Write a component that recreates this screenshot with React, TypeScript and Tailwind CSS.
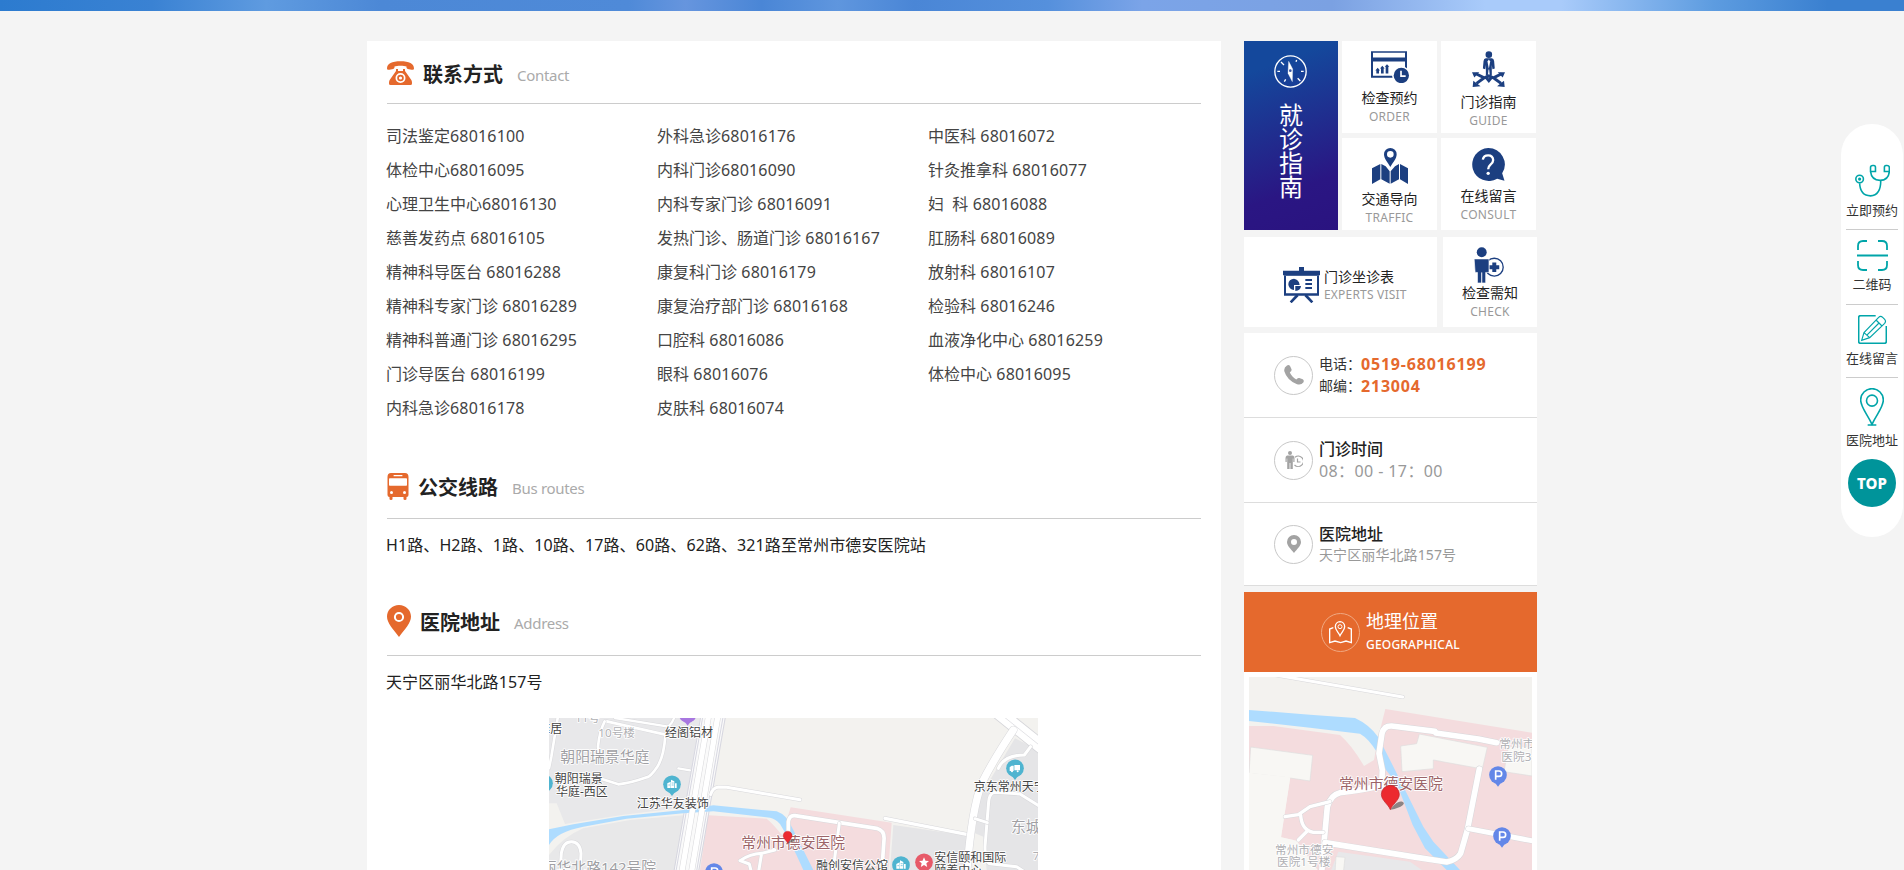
import React from "react";

const CONTACTS: string[][] = [
  ["司法鉴定", "68016100"], ["外科急诊", "68016176"], ["中医科", " 68016072"],
  ["体检中心", "68016095"], ["内科门诊", "68016090"], ["针灸推拿科", " 68016077"],
  ["心理卫生中心", "68016130"], ["内科专家门诊", " 68016091"], ["妇\u00a0 科", " 68016088"],
  ["慈善发药点", " 68016105"], ["发热门诊、肠道门诊", " 68016167"], ["肛肠科", " 68016089"],
  ["精神科导医台", " 68016288"], ["康复科门诊", " 68016179"], ["放射科", " 68016107"],
  ["精神科专家门诊", " 68016289"], ["康复治疗部门诊", " 68016168"], ["检验科", " 68016246"],
  ["精神科普通门诊", " 68016295"], ["口腔科", " 68016086"], ["血液净化中心", " 68016259"],
  ["门诊导医台", " 68016199"], ["眼科", " 68016076"], ["体检中心", " 68016095"],
  ["内科急诊", "68016178"], ["皮肤科", " 68016074"],
];

const PhoneIcon = () => (
  <svg width="27" height="24" viewBox="0 0 27 24" fill="#e5692d">
    <path d="M0 7.5C0 2.5 5 .3 13.5 .3S27 2.5 27 7.500C27 8.700 26 9 24.500 8.700L20.800 8C19.500 7.700 19.500 7 19.500 5.600C17 4.500 10 4.500 7.500 5.600C7.500 7 7.500 7.700 6.200 8L2.500 8.700C1 9 0 8.700 0 7.500Z" />
    <path fillRule="evenodd" d="M9 8H11V10H16V8H18V10L24 18.500C25 20 25 21 25 22.500Q25 24 23.500 24H3.500Q2 24 2 22.500C2 21 2 20 3 18.500L9 10ZM13.500 12A5 5 0 1 0 13.500 22A5 5 0 1 0 13.500 12ZM13.500 13.700A3.300 3.300 0 1 1 13.500 20.300A3.300 3.300 0 1 1 13.500 13.700ZM13.500 15.400A1.600 1.600 0 1 0 13.500 18.600A1.600 1.600 0 1 0 13.500 15.400Z" />
  </svg>
);

const BusIcon = () => (
  <svg width="22" height="27" viewBox="0 0 22 27">
    <path fill="#e5692d" d="M4 0H18Q21.500 0 21.500 4V22Q21.500 24 19.500 24V26Q19.500 27 18 27T16.500 26V24H5.500V26Q5.500 27 4 27T2.500 26V24Q.5 24 .5 22V4Q.5 0 4 0Z" />
    <rect x="2" y="5.300" width="18" height="7.500" rx=".8" fill="#fff" />
    <rect x="6.500" y="2" width="9" height="1.300" rx=".6" fill="#fff" />
    <circle cx="4.500" cy="19.500" r="1.500" fill="#fff" />
    <circle cx="17.500" cy="19.500" r="1.500" fill="#fff" />
  </svg>
);

const PinIcon = () => (
  <svg width="24" height="32" viewBox="0 0 24 32">
    <path fill="#e5692d" d="M12 0C5.200 0 0 5.200 0 11.500C0 18 6 24 12 32C18 24 24 18 24 11.500C24 5.200 18.800 0 12 0Z" />
    <circle cx="12" cy="12" r="4.100" fill="none" stroke="#fff" strokeWidth="2" />
  </svg>
);

function Heading({ icon, title, en }: { icon: React.ReactNode; title: string; en: string }) {
  return (
    <>
      {icon}
      <h2 className="ml-[9px] pt-[3px] text-[20px] leading-[26px] font-bold text-[#222]">{title}</h2>
      <span className="ml-[14px] pt-[4px] text-[15px] leading-[24px] tracking-[-0.3px] text-[#aaa]">{en}</span>
    </>
  );
}

type PoiProps = { x: number; y: number; color: string; children?: React.ReactNode };
function Poi({ x, y, color, children }: PoiProps) {
  return (
    <g transform={`translate(${x} ${y})`}>
      <path d="M-10 22L0 35L10 22Z" fill={color} />
      <circle r="26.500" fill={color} />
      {children}
    </g>
  );
}

const Building = () => (
  <g fill="#fff">
    <path d="M-14 -3L-4 -8V11H-14Z" />
    <path d="M-3 -14L7 -9V11H-3Z" />
    <path d="M9 -3H14V11H9Z" />
    <path stroke="#4fb4d0" strokeWidth="2" d="M-1 -4H5M-1 2H5M-11 2H-6" />
  </g>
);
const Parking = () => <path d="M-7 14V-12H3Q11 -12 11 -4T3 4H-6" fill="none" stroke="#fff" strokeWidth="5" />;

function Road({ d, w = 9 }: { d: string; w?: number }) {
  return (
    <g fill="none" strokeLinecap="round" strokeLinejoin="round">
      <path d={d} stroke="#d8d8db" strokeWidth={w + 3} />
      <path d={d} stroke="#fff" strokeWidth={w} />
    </g>
  );
}

const Marker = () => (
  <>
    <path d="M0 0C10 -14 24 -28 36 -24S36 -6 0 0Z" fill="#555" opacity=".65" />
    <path d="M0 0C-6 -16 -27 -28 -27 -46A27 27 0 0 1 27 -46C27 -28 6 -16 0 0Z" fill="#ec2a2f" stroke="#b9242b" strokeWidth="2" />
  </>
);

const MAP_TEXT = "font-['Noto_Sans','Noto_Sans_CJK_SC',sans-serif] [paint-order:stroke] stroke-white [stroke-width:5px] [stroke-linejoin:round]";

function CityMap() {
  return (
    <svg width="489" height="152" viewBox="27 54 1467 456" className="block">
      <rect x="27" y="54" width="1467" height="456" fill="#f3f2ef" />
      <path d="M27 54H490L440 322L250 344L75 372L50 310H27Z" fill="#e8e8ea" />
      <path d="M130 385L270 360L430 346L405 510H27V465Q70 410 130 385Z" fill="#e8e8e9" />
      <path d="M505 346L680 356Q700 372 728 408L745 345L752 322L1055 368L1045 510H480Z" fill="#f4dcde" />
      <path d="M1060 375L1290 408L1280 510H1050Z" fill="#e5e5e7" />
      <path d="M1425 115L1494 150V510H1340L1330 410L1305 400L1320 290Z" fill="#e5e5e7" />
      <g fill="none">
        <Road d="M225 54L385 80Q400 66 404 48" w={7} />
        <Road d="M200 64L376 104Q372 170 352 200T320 232Q270 250 235 253L188 238" w={8} />
        <Road d="M194 64Q178 95 174 140L176 152" w={8} />
        <Road d="M54 48L34 170L27 205" w={8} />
        <Road d="M415 205L450 211" w={7} />
        <Road d="M60 520L64 460Q70 424 95 425T123 460L120 520" w={9} />
        <path d="M520 40L437 525" stroke="#fafafa" strokeWidth="72" />
        <path d="M484 40L400 525M558 40L474 525M490 40L406 525M551 40L468 525" stroke="#d0d0dc" strokeWidth="2.500" />
      </g>
      <path d="M27 388L100 373L250 348L430 330L520 316L710 334Q740 345 755 380L820 510H790Q750 420 720 372Q705 355 690 353L520 334L430 340L260 356L130 380Q50 395 27 435Z" fill="#aedcff" />
      <Road d="M507 40L424 525" w={16} />
      <Road d="M535 40L453 525" w={16} />
      <Road d="M512 284Q517 264 535 261L560 262L780 299" w={9} />
      <Road d="M745 410V365Q748 345 765 347L1010 385Q1035 392 1032 420L1025 520" w={11} />
      <Road d="M898 370L878 520" w={9} />
      <Road d="M705 450L665 460L655 520M665 460Q630 462 600 482L628 492L635 520" w={9} />
      <Road d="M1035 355L1280 403" w={10} />
      <path d="M1360 25L1510 145" stroke="#d5d5d9" strokeWidth="44" />
      <path d="M1360 25L1510 145" stroke="#fff" strokeWidth="39" />
      <path d="M1360 25L1510 145" stroke="#d5d5d9" strokeWidth="2" />
      <Road d="M1420 90Q1360 180 1325 250Q1295 330 1280 520" w={22} />
      <Road d="M1472 140L1453 165Q1392 165 1375 205" w={9} />
      <Road d="M1510 326L1440 282L1362 277Q1348 282 1346 305L1335 440Q1335 488 1350 491L1430 500L1475 530" w={9} />
      <Road d="M1305 356L1342 368" w={9} />
      <Poi x={443} y={42} color="#a877e0" />
      <Poi x={396} y={253} color="#4fb4d0"><Building /></Poi>
      <Poi x={12} y={250} color="#4fb4d0" />
      <Poi x={1425} y={205} color="#4fb4d0">
        <path d="M-16 -3L-10 -8H-4V8H-16ZM-2 -10H15V6H-2Z" fill="#fff" />
        <circle cx="-9" cy="9" r="3" fill="#fff" /><circle cx="8" cy="9" r="3" fill="#fff" />
      </Poi>
      <Poi x={522} y={516} color="#6387e8"><Parking /></Poi>
      <Poi x={1083} y={495} color="#4fb4d0"><Building /></Poi>
      <Poi x={1152} y={487} color="#e75a69">
        <path fill="#fff" d="M0 -15L4.500 -5L15 -4L7 3L9.500 14L0 8L-9.500 14L-7 3L-15 -4L-4.500 -5Z" />
      </Poi>
      <g className={MAP_TEXT} fontSize="36" fill="#444">
        <text x="-5" y="98">雅居</text>
        <text x="375" y="110">经阁铝材</text>
        <text x="44" y="248">朝阳瑞景</text>
        <text x="48" y="287">华庭-西区</text>
        <text x="290" y="323">江苏华友装饰</text>
        <text x="1301" y="274">京东常州天宁</text>
        <text x="1183" y="485">安信颐和国际</text>
        <text x="1183" y="524">颐养中心</text>
        <text x="828" y="510">融创安信公馆</text>
      </g>
      <g className={MAP_TEXT} fontSize="35" fill="#b0b0b4">
        <text x="105" y="65">11号</text>
        <text x="175" y="112">10号楼</text>
        <text x="1478" y="480">7</text>
      </g>
      <g className={MAP_TEXT} fontSize="44.500" fill="#a0a0a4">
        <text x="61" y="186">朝阳瑞景华庭</text>
        <text x="5" y="519">丽华北路142号院</text>
        <text x="1413" y="397">东城</text>
      </g>
      <text className={MAP_TEXT} fontSize="44.500" fill="#9c6468" x="604" y="445">常州市德安医院</text>
      <g transform="translate(743 430) scale(.5)"><Marker /></g>
    </svg>
  );
}

function SiteMap() {
  return (
    <svg width="283" height="193" viewBox="57 51 849 579" className="block">
      <rect x="57" y="51" width="849" height="579" fill="#f3f2ef" />
      <path d="M57 198L130 198L330 225Q365 255 402 318L432 300L445 230L466 147L906 218V640H270L190 540L153 532L180 355L57 340Z" fill="#f4dcde" />
      <path d="M62 261L248 286L240 363L180 354L57 340Z" fill="#f8f7f4" stroke="#dedede" strokeWidth="2" />
      <path d="M57 338L181 352L153 532L200 542L270 640H57Z" fill="#f8f7f4" />
      <path d="M57 150L240 164L375 174Q420 195 445 232L480 300L530 400L580 500L610 545L690 630H650L585 565L548 495L500 370L468 330L440 275Q415 235 390 221L240 203L57 183Z" fill="#aedcff" />
      <path d="M512 258L560 251L568 222L772 262L757 327L610 300V326L516 335Z" fill="#f8f7f4" stroke="#dedede" strokeWidth="2" />
      <path d="M835 260H906V348L822 335Z" fill="#f8f7f4" stroke="#dedede" strokeWidth="2" />
      <path d="M325 575L540 605L590 640H300Z" fill="#e8e8ea" />
      <Road d="M130 44L518 111" w={9} />
      <Road d="M455 380L457 330L447 280L456 220Q462 197 485 198L615 214L617 219L745 237L800 248" w={17} />
      <Road d="M455 375Q430 385 330 398Q302 405 292 440L282 550L275 640" w={17} />
      <Road d="M165 470L205 464L240 440L300 425M212 466Q215 510 250 517H280M232 513L205 540" w={10} />
      <Road d="M285 548L560 592L650 606Q680 600 692 580L712 510L748 327" w={17} />
      <Road d="M715 506L910 543" w={15} />
      <path d="M318 590L345 592L340 640H315Z" fill="#f8f7f4" stroke="#dedede" strokeWidth="2" />
      <Poi x={804} y={345} color="#6387e8"><Parking /></Poi>
      <Poi x={816} y={528} color="#6387e8"><Parking /></Poi>
      <g className={MAP_TEXT} fontSize="35" fill="#b0b0b4">
        <text x="808" y="264">常州市德安</text>
        <text x="814" y="303">医院3号楼</text>
        <text x="135" y="581">常州市德安</text>
        <text x="141" y="619">医院1号楼</text>
      </g>
      <text className={MAP_TEXT} fontSize="44.500" fill="#9c6468" x="327" y="386">常州市德安医院</text>
      <g transform="translate(481 449)"><Marker /></g>
    </svg>
  );
}

const NAVY = "#1c3f80";

const OrderIcon = () => (
  <svg width="38" height="32" viewBox="420 63 114 95" fill={NAVY}>
    <path fillRule="evenodd" d="M420 63H528V143H420ZM426 68V82H522V68ZM426 94V137H522V94Z" />
    <path d="M436 130V121H433L440 113L447 121H444V130ZM450 130V115H447L454 107L461 115H458V130ZM464 130V110H461L468 102L475 110H472V130Z" />
    <circle cx="511" cy="136" r="28" fill="#fff" />
    <circle cx="511" cy="136" r="23" />
    <path d="M510 122V138H524" fill="none" stroke="#fff" strokeWidth="5" />
  </svg>
);
const GuideIcon = () => (
  <svg width="33" height="36" viewBox="726 62 100 109" fill={NAVY}>
    <circle cx="777" cy="73" r="10" />
    <path d="M768 84H786Q792 84 793 92L795 115L788 117L786 104V136H780L778 118H776L774 136H768V104L766 117L759 115L761 92Q762 84 768 84Z" />
    <path d="M777 88L781 94L777 116L773 94Z" fill="#fff" />
    <path d="M738 131L763 143L777 137L791 143L816 131M763 143L740 160M791 143L814 160M768 141L777 152L786 141" fill="none" stroke={NAVY} strokeWidth="9" />
    <path d="M726 126H748L733 142ZM826 126H804L819 142ZM728 171L730 152L752 169ZM825 171L823 152L802 169Z" />
  </svg>
);
const TrafficIcon = () => (
  <svg width="36" height="36" viewBox="423 354 108 108" fill={NAVY}>
    <path fillRule="evenodd" d="M478 354A19 19 0 0 1 497 373C497 386 486 397 478 411C470 397 459 386 459 373A19 19 0 0 1 478 354ZM478 363A10 10 0 1 0 478 383A10 10 0 1 0 478 363Z" />
    <path d="M423 415L448 402V448L423 462ZM451 402L464 409L476 424V461L451 448ZM479 424L492 409L504 402V448L479 461ZM507 402L531 415V462L507 448Z" />
  </svg>
);
const ConsultIcon = () => (
  <svg width="34" height="33" viewBox="725 354 101 99" className="-ml-[2px]">
    <path fill={NAVY} d="M776 354A49.500 49.500 0 0 1 818 430L825 452L803 446A49.500 49.500 0 1 1 776 354Z" />
    <path d="M760 389Q762 376 776 376T791 390Q791 398 783 404Q776 410 776 418" fill="none" stroke="#fff" strokeWidth="7" />
    <circle cx="776" cy="430" r="5" fill="#fff" />
  </svg>
);
const ExpertsIcon = () => (
  <svg width="37" height="36" viewBox="159 126 111 108" fill={NAVY}>
    <path d="M207 126H222V137H270V151H159V137H207Z" />
    <path fillRule="evenodd" d="M162 151H267V212H162ZM168 153V205H261V153Z" />
    <path d="M203 210L182 232M226 210L247 232" stroke={NAVY} strokeWidth="8" />
    <path d="M192 161A17 17 0 1 0 192 195V180H209Q207 163 192 161Z" />
    <path d="M196 183H213Q212 196 196 198Z" />
    <path d="M226 165H246M226 177H246M226 189H246" stroke={NAVY} strokeWidth="6" />
  </svg>
);
const CheckIcon = () => (
  <svg width="30" height="36" viewBox="735 65 90 109" fill={NAVY} className="-ml-[2px]">
    <circle cx="796" cy="126" r="27" fill="none" stroke={NAVY} strokeWidth="4" />
    <path d="M790 112H802V120H811V132H802V141H790V132H781V120H790Z" />
    <path d="M735 101H780V142H770V174H745V142H738Z" stroke="#fff" strokeWidth="2" />
    <path d="M758 142V174" stroke="#fff" strokeWidth="3" />
    <circle cx="758" cy="81" r="15" />
  </svg>
);

function Tile({ icon, zh, en, tight }: { icon: React.ReactNode; zh: string; en: string; tight?: boolean }) {
  return (
    <div className="flex flex-col items-center bg-white pt-[10px]">
      {icon}
      <div className={`text-[14px] leading-[20px] text-[#222] ${tight ? "mt-0" : "mt-[5px]"}`}>{zh}</div>
      <div className="text-[12px] leading-[17px] tracking-[0.3px] text-[#999]">{en}</div>
    </div>
  );
}

function Info({ icon, children }: { icon: React.ReactNode; children: React.ReactNode }) {
  return (
    <div className="flex items-center gap-[6px] border-b border-[#ddd] pl-[30px]">
      <div className="flex h-[39px] w-[39px] items-center justify-center rounded-full border border-[#c8c8c8]">{icon}</div>
      <div>{children}</div>
    </div>
  );
}

function SideLink({ icon, label, className }: { icon: React.ReactNode; label: string; className: string }) {
  return (
    <div className={`flex w-[52px] flex-col items-center justify-between ${className}`}>
      {icon}
      <span className="text-[13px] leading-[18px] whitespace-nowrap text-[#333]">{label}</span>
    </div>
  );
}

const TEAL = "#00a5a9";

export default function App() {
  return (
    <div className="relative h-[870px] w-full overflow-hidden bg-[#f4f4f4] font-['Noto_Sans','Noto_Sans_CJK_SC',sans-serif]">
      <div className="h-[11px] bg-[linear-gradient(90deg,#2c7bcf_0%,#3a82d3_8%,#5f9be0_14%,#4c88d6_20%,#4f8ad8_33%,#6695de_36%,#4a86d6_40%,#5f96de_44%,#4a86d6_48%,#5590dc_55%,#7ba4e8_60%,#7ba1e2_70%,#a9cbfa_78%,#a9cbfa_82%,#5d9ce0_90%,#3a80d0_96%,#3a80d0_100%)]" />
      <div className="mt-[30px] ml-[367px] flex w-[1170px] justify-between">
        <main className="h-[829px] w-[854px] overflow-hidden bg-white px-[20px]">
          <div className="flex h-[63px] items-center border-b border-[#ccc] pt-[2px]">
            <Heading icon={<PhoneIcon />} title="联系方式" en="Contact" />
          </div>
          <ul className="mt-[15px] -mr-px -ml-px grid grid-cols-[271px_271px_271px] text-[16px] leading-[34px] text-[#444]">
            {CONTACTS.map(([name, tel], i) => (
              <li key={i} className="h-[34px] whitespace-pre">
                {name}
                <span className="tracking-[0.18px]">{tel}</span>
              </li>
            ))}
          </ul>
          <div className="mt-[30px] flex h-[64px] items-center border-b border-[#ccc] pb-[1px]">
            <Heading icon={<BusIcon />} title="公交线路" en="Bus routes" />
          </div>
          <p className="mt-[10px] -ml-px text-[16px] leading-[32px] tracking-[0.1px] text-[#222]">H1路、H2路、1路、10路、17路、60路、62路、321路至常州市德安医院站</p>
          <div className="mt-[27px] flex h-[68px] items-center border-b border-[#ccc] pb-[1px]">
            <Heading icon={<PinIcon />} title="医院地址" en="Address" />
          </div>
          <p className="mt-[10px] -ml-px text-[16px] leading-[32px] tracking-[0.1px] text-[#222]">天宁区丽华北路157号</p>
          <div className="mt-[20px] ml-[162px]"><CityMap /></div>
        </main>

        <aside className="w-[293px]">
          <div className="flex h-[189px] gap-[4px]">
            <div className="flex w-[94px] flex-col items-center bg-[linear-gradient(160deg,#14489c_0%,#14489c_15%,#2a1683_75%,#2a1380_100%)] pt-[14px]">
              <svg width="33" height="33" viewBox="132 75 99 99" fill="none" stroke="#fff" strokeWidth="4" className="-ml-[2px]">
                <circle cx="181.500" cy="124.500" r="47" />
                <path d="M153 96L162 105M200 90L198 95M142 124H150M213 124H221M163 155L167 148M211 153L203 145" />
                <path d="M176 94L188 117L187 155L174 130Z" fill="#fff" strokeWidth="1" />
                <circle cx="181" cy="122" r="4" fill="#3a56a6" stroke="none" />
              </svg>
              <div className="mt-[15px] w-[24px] text-[24px] leading-[24px] text-white">就诊指南</div>
            </div>
            <div className="grid w-[194px] grid-cols-2 grid-rows-[92px_92px] gap-x-[4px] gap-y-[5px]">
              <Tile icon={<OrderIcon />} zh="检查预约" en="ORDER" />
              <Tile icon={<GuideIcon />} zh="门诊指南" en="GUIDE" />
              <Tile icon={<TrafficIcon />} zh="交通导向" en="TRAFFIC" />
              <Tile icon={<ConsultIcon />} zh="在线留言" en="CONSULT" />
            </div>
          </div>
          <div className="mt-[7px] grid h-[90px] grid-cols-[193px_94px] gap-[6px]">
            <div className="flex items-center gap-[4px] bg-white pt-[6px] pl-[39px]">
              <ExpertsIcon />
              <div>
                <div className="text-[14px] leading-[19px] text-[#222]">门诊坐诊表</div>
                <div className="text-[12px] leading-[18px] tracking-[0.2px] text-[#999]">EXPERTS VISIT</div>
              </div>
            </div>
            <Tile icon={<CheckIcon />} zh="检查需知" en="CHECK" tight />
          </div>
          <div className="mt-[6px] grid grid-rows-[85px_85px_83px] bg-white">
            <Info icon={
              <svg width="20" height="20" viewBox="0 0 20 20" fill="#a3a3a3">
                <path d="M3 .5Q5 -.8 6.300 1.500L7.500 4.300Q8 6 5.800 7.200Q7.500 11.800 12.300 14.500Q13.500 12.500 15.300 13L18.700 14.200Q20.500 15.300 19.300 17.500Q17 20.500 12.500 19Q3 15 .4 6.500Q-.5 2.500 3 .5Z" />
              </svg>
            }>
              <div className="flex text-[14px] leading-[22px] text-[#333]">电话：<b className="text-[16px] font-bold tracking-[0.8px] text-[#e5692d]">0519-68016199</b></div>
              <div className="flex text-[14px] leading-[22px] text-[#333]">邮编：<b className="text-[16px] font-bold tracking-[0.8px] text-[#e5692d]">213004</b></div>
            </Info>
            <Info icon={
              <svg width="18" height="18" viewBox="0 0 18 18" fill="#a3a3a3">
                <circle cx="5" cy="2" r="2" />
                <path d="M2 4.500H8Q9.500 5 9.500 7V11H8.300V7.500H7.800V18H5.400V12H4.600V18H2.200V7.500H1.700V11H.5V7Q.5 5 2 4.500Z" />
                <path d="M10 6.200A5.200 5.200 0 1 1 9.500 14M12.500 7.500V11H15.500" fill="none" stroke="#a3a3a3" strokeWidth="1.200" />
              </svg>
            }>
              <div className="text-[16px] leading-[22px] font-medium text-[#222]">门诊时间</div>
              <div className="text-[16px] leading-[22px] tracking-[0.4px] text-[#999]">08：00 - 17：00</div>
            </Info>
            <Info icon={
              <svg width="14" height="18" viewBox="0 0 14 18" fill="#a3a3a3">
                <path fillRule="evenodd" d="M7 0A7 7 0 0 1 14 7C14 11 10 14 7 18C4 14 0 11 0 7A7 7 0 0 1 7 0ZM7 4A3 3 0 1 0 7 10A3 3 0 1 0 7 4Z" />
              </svg>
            }>
              <div className="text-[16px] leading-[22px] font-medium text-[#222]">医院地址</div>
              <div className="-mt-px pb-px text-[14px] leading-[21px] tracking-[0.1px] text-[#999]">天宁区丽华北路157号</div>
            </Info>
          </div>
          <div className="mt-[6px] flex h-[80px] items-center gap-[6px] bg-[#e5692d] pl-[77px]">
            <div className="flex h-[39px] w-[39px] items-center justify-center rounded-full border border-[#f0a882]">
              <svg width="23" height="23" viewBox="300 630 69 69" fill="none" stroke="#fff" strokeWidth="4">
                <path d="M313 650L302 654V695L318 690L335 695L351 690L367 695V654L356 650" />
                <path d="M333 632A15 15 0 0 1 347 647C347 657 338 664 333 674C328 664 319 657 319 647A15 15 0 0 1 333 632Z" />
                <circle cx="333" cy="647" r="6" strokeWidth="3" />
              </svg>
            </div>
            <div className="text-white">
              <div className="text-[18px] leading-[24px]">地理位置</div>
              <div className="pt-px text-[12px] leading-[21px] font-medium tracking-[0.2px]">GEOGRAPHICAL</div>
            </div>
          </div>
          <div className="bg-white p-[5px]"><SiteMap /></div>
        </aside>
      </div>

      <nav className="absolute top-[124px] right-px flex h-[413px] w-[62px] flex-col items-center rounded-[31px] bg-white pt-[40px]">
        <SideLink className="h-[55px]" label="立即预约" icon={
          <svg width="35" height="33" viewBox="92 160 106 99" fill="none" stroke={TEAL} strokeWidth="4.800">
            <circle cx="106" cy="205" r="11.500" /><circle cx="106" cy="205" r="2.500" />
            <path d="M106 218Q108 256 139 256Q170 254 170 210" />
            <path d="M154 182H139V170Q139 164 146 164H149Q154 164 154 170ZM181 182H196V170Q196 164 189 164H186Q181 164 181 170ZM139 182Q142 209 168 209T196 182" />
          </svg>
        } />
        <div className="mt-[10px] mb-[10px] h-px w-[52px] bg-[#ccc]" />
        <SideLink className="h-[53px]" label="二维码" icon={
          <svg width="31" height="31" viewBox="0 0 31 31" fill="none" stroke={TEAL} strokeWidth="1.800">
            <path d="M1 10V6Q1 1 6 1H10M21 1H25Q30 1 30 6V10M1 21V25Q1 30 6 30H10M21 30H25Q30 30 30 25V21M0 15.500H31" />
          </svg>
        } />
        <div className="mt-[11px] mb-[10px] h-px w-[52px] bg-[#ccc]" />
        <SideLink className="h-[52px]" label="在线留言" icon={
          <svg width="29" height="29" viewBox="102 615 87 87" fill="none" stroke={TEAL} strokeWidth="4.800">
            <path d="M155 617H110Q104 617 104 623V694Q104 700 110 700H181Q187 700 187 694V648" />
            <path d="M113 691L120 668L164 622Q170 616 176 622L182 628Q187 634 182 640L137 683ZM156 630L174 648M120 668L137 683M128 676L165 639" strokeWidth="3.500" />
          </svg>
        } />
        <div className="mt-[10px] mb-[10px] h-px w-[52px] bg-[#ccc]" />
        <SideLink className="h-[61px]" label="医院地址" icon={
          <svg width="24" height="38" viewBox="108 834 72 114" fill="none" stroke={TEAL} strokeWidth="4.800">
            <path d="M144 836A34 34 0 0 1 178 870C178 892 158 912 144 943C130 912 110 892 110 870A34 34 0 0 1 144 836ZM131 945H157" />
            <circle cx="144" cy="872" r="16.500" />
          </svg>
        } />
        <div className="mt-[10px] flex h-[48px] w-[48px] shrink-0 items-center justify-center rounded-full bg-[#00949a] text-[15px] font-extrabold text-white">TOP</div>
      </nav>
    </div>
  );
}
